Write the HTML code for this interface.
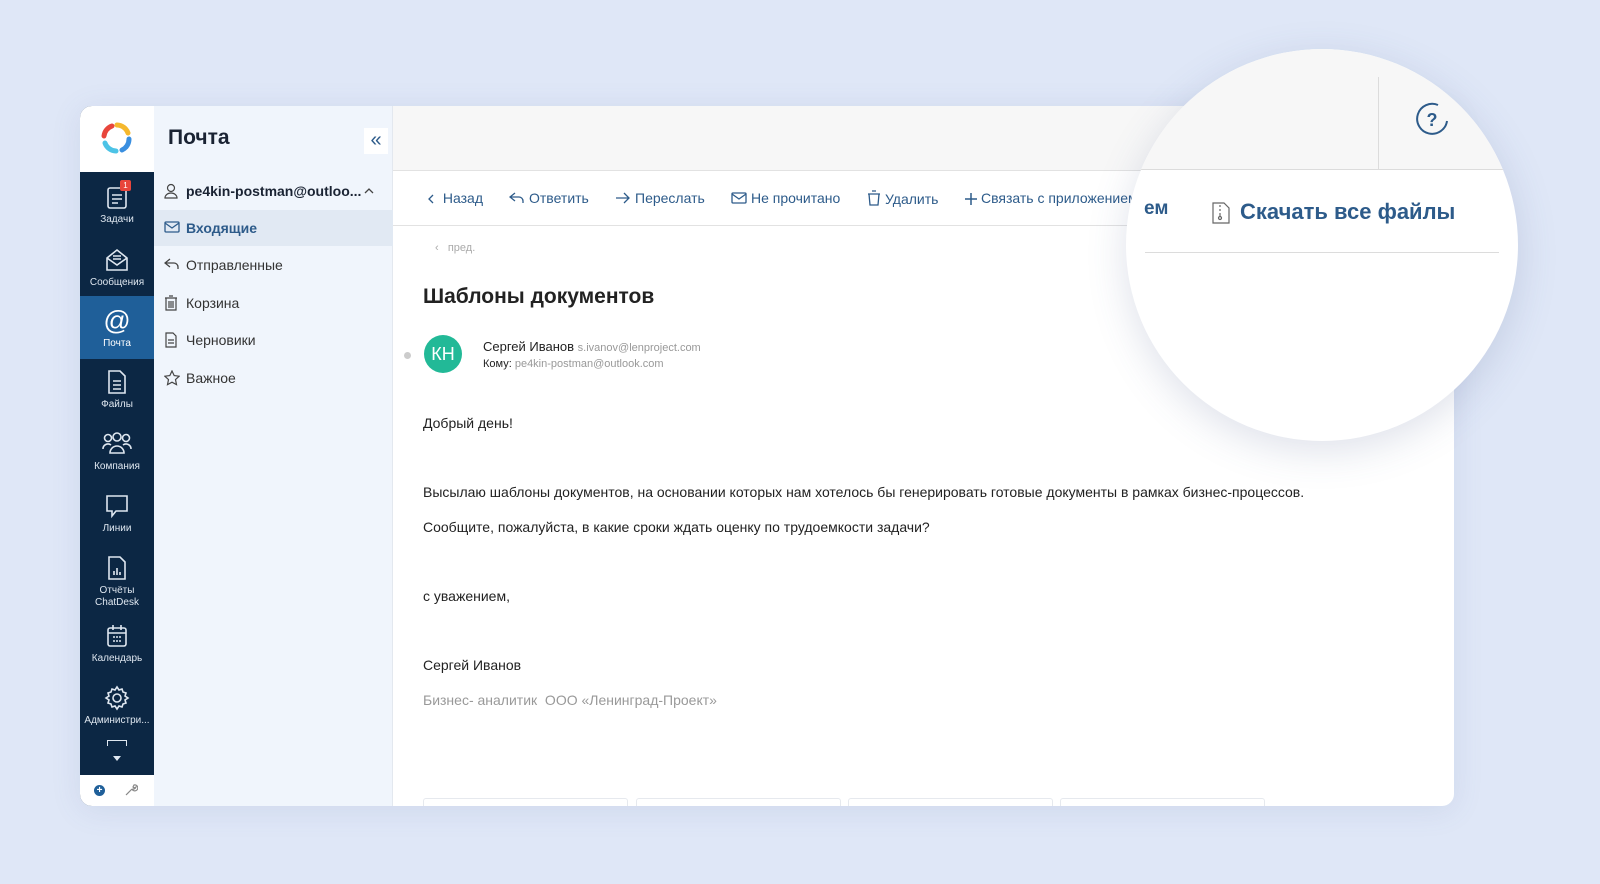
<!DOCTYPE html>
<html><head><meta charset="utf-8"><style>
*{box-sizing:border-box;margin:0;padding:0}
body{width:1600px;height:884px;background:#dfe7f7;font-family:"Liberation Sans","Noto Sans CJK SC",sans-serif;position:relative;overflow:hidden;color:#222}
.card{position:absolute;left:80px;top:106px;width:1374px;height:700px;background:#fff;border-radius:12px;overflow:hidden;box-shadow:0 4px 30px rgba(90,110,160,.12)}
.rail{position:absolute;left:0;top:0;width:74px;height:700px;background:#0c2744}
.logo{position:absolute;left:0;top:0;width:74px;height:66px;background:#fff}
.ri{position:absolute;left:0;width:74px;text-align:center;color:#dfe7f0;font-size:10px;line-height:12px}
.ri svg{display:block;margin:0 auto 3px}
.rbot{position:absolute;left:0;bottom:0;width:74px;height:31px;background:#fff}
.fp{position:absolute;left:74px;top:0;width:239px;height:700px;background:#f0f5fc;border-right:1px solid #e3e8ef}
.fp h1{position:absolute;left:14px;top:20px;font-size:21px;font-weight:bold;color:#1a2333}
.fi{position:absolute;left:0;width:239px;height:36px;font-size:14px;color:#333;padding-left:32px;line-height:36px}
.fi svg{position:absolute;left:10px;top:10px}
.main{position:absolute;left:313px;top:0;right:0;height:700px}
.hdr{position:absolute;left:0;top:0;right:0;height:65px;background:#f7f7f7;border-bottom:1px solid #e2e2e2}
.tb{position:absolute;top:65px;left:0;right:0;height:55px;border-bottom:1px solid #e2e2e2;font-size:14px;color:#2d5b8a}
.tb span{position:absolute;top:19px;white-space:nowrap}
.tb svg{vertical-align:-2px;margin-right:4px}
.t{position:absolute;left:30px;font-size:14px;white-space:nowrap}
.att{position:absolute;top:692px;width:205px;height:20px;border:1px solid #e6e9ee;border-radius:3px}
.circle{position:absolute;left:1126px;top:49px;width:392px;height:392px;border-radius:50%;background:#fff;box-shadow:0 10px 40px rgba(70,90,140,.18);overflow:hidden}
</style></head><body>
<div class="card">
 <div class="rail">
  <div class="logo"><svg width="74" height="66" viewBox="0 0 74 66"><g fill="none" stroke-width="5" stroke-linecap="round"><path d="M24 30 A12 12 0 0 1 32 20" stroke="#e8463c"/><path d="M37 19 A12 12 0 0 1 48 27" stroke="#f5b82e"/><path d="M49 33 A12 12 0 0 1 42 44" stroke="#3a8fe0"/><path d="M36 45 A12 12 0 0 1 25 37" stroke="#4cc3e6"/></g></svg></div>
  <div class="ri" style="top:77px"><svg width="24" height="28" viewBox="0 0 24 26" fill="none" stroke="#dfe7f0" stroke-width="1.6"><rect x="3" y="4" width="18" height="20" rx="2"/><path d="M7 11h10M7 15h10M7 19h6"/></svg>Задачи<div style="position:absolute;left:40px;top:-3px;width:11px;height:11px;background:#e8463c;color:#fff;font-size:8px;line-height:11px;border-radius:2px">1</div></div>
  <div class="ri" style="top:140px"><svg width="26" height="28" viewBox="0 0 26 26" fill="none" stroke="#dfe7f0" stroke-width="1.6"><path d="M3 11 13 3l10 8v12H3z"/><path d="M3 11l10 7 10-7M9 9h8M9 12h8"/></svg>Сообщения</div>
  <div style="position:absolute;top:190px;left:0;width:74px;height:63px;background:#1f5f99"></div>
  <div class="ri" style="top:201px;color:#fff"><svg width="28" height="28" viewBox="0 0 26 26"><text x="13" y="21" text-anchor="middle" font-size="25" fill="#fff" font-family="Liberation Sans">@</text></svg>Почта</div>
  <div class="ri" style="top:262px"><svg width="24" height="28" viewBox="0 0 24 26" fill="none" stroke="#dfe7f0" stroke-width="1.6"><path d="M4 2h11l5 5v17H4z"/><path d="M8 12h8M8 16h8M8 20h8"/></svg>Файлы</div>
  <div class="ri" style="top:324px"><svg width="32" height="28" viewBox="0 0 32 26" fill="none" stroke="#dfe7f0" stroke-width="1.6"><circle cx="7" cy="7" r="3.5"/><circle cx="16" cy="6" r="4"/><circle cx="25" cy="7" r="3.5"/><path d="M2 18a5 5 0 0 1 8-4M30 18a5 5 0 0 0-8-4M9 22a7 7 0 0 1 14 0z"/></svg>Компания</div>
  <div class="ri" style="top:386px"><svg width="26" height="28" viewBox="0 0 26 26" fill="none" stroke="#dfe7f0" stroke-width="1.6"><path d="M3 3h20v15H12l-4 5v-5H3z"/></svg>Линии</div>
  <div class="ri" style="top:448px"><svg width="24" height="28" viewBox="0 0 24 26" fill="none" stroke="#dfe7f0" stroke-width="1.6"><path d="M4 2h11l5 5v17H4z"/><path d="M9 20v-4M12 20v-7M15 20v-3"/></svg>Отчёты<br>ChatDesk</div>
  <div class="ri" style="top:516px"><svg width="24" height="28" viewBox="0 0 24 26" fill="none" stroke="#dfe7f0" stroke-width="1.6"><rect x="3" y="5" width="18" height="18" rx="2"/><path d="M3 10h18M8 2v5M16 2v5M8 14h2M11 14h2M14 14h2M8 18h2M11 18h2M14 18h2"/></svg>Календарь</div>
  <div class="ri" style="top:578px"><svg width="26" height="28" viewBox="0 0 26 26" fill="none" stroke="#dfe7f0" stroke-width="1.6"><circle cx="13" cy="13" r="4"/><path d="M13 2l2 3 3-1 1 3 3 1-1 3 3 2-3 2 1 3-3 1-1 3-3-1-2 3-2-3-3 1-1-3-3-1 1-3-3-2 3-2-1-3 3-1 1-3 3 1z"/></svg>Администри...</div>
  <div style="position:absolute;top:634px;left:27px;width:20px;height:6px;border:1.6px solid #dfe7f0;border-bottom:none"></div>
  <div style="position:absolute;top:650px;left:33px;border:4px solid transparent;border-top:5px solid #dfe7f0"></div>
  <div class="rbot"><div style="position:absolute;left:14px;top:10px;width:11px;height:11px;border-radius:50%;background:#1f5f99;color:#fff;font-size:10px;line-height:11px;text-align:center;font-weight:bold">+</div><svg style="position:absolute;left:44px;top:8px" width="14" height="14" viewBox="0 0 14 14" fill="none" stroke="#888" stroke-width="1.2"><path d="M2 12l6-6M8 6a3 3 0 1 0 2-4l-1 2 1 1 2-1a3 3 0 0 1-4 2"/></svg></div>
 </div>
 <div class="fp">
  <h1>Почта</h1>
  <div style="position:absolute;left:210px;top:22px;width:24px;height:26px;background:#fff;color:#2d5b8a;font-size:20px;text-align:center;line-height:24px">«</div>
  <div class="fi" style="top:67px;font-weight:bold;color:#1a2333"><svg width="14" height="16" viewBox="0 0 14 16" fill="none" stroke="#444" stroke-width="1.2"><circle cx="7" cy="5" r="3.5"/><path d="M1 15a6 5 0 0 1 12 0z"/></svg>pe4kin-postman@outloo...<svg style="left:210px;top:15px" width="10" height="6" viewBox="0 0 10 6" fill="none" stroke="#444" stroke-width="1.3"><path d="M1 5l4-4 4 4"/></svg></div>
  <div class="fi" style="top:104px;background:#e1e9f3;color:#2d5b8a;font-weight:bold"><svg width="16" height="14" viewBox="0 0 16 14" fill="none" stroke="#2d5b8a" stroke-width="1.3"><rect x="1" y="2" width="14" height="10" rx="1"/><path d="M1 3l7 5 7-5"/></svg>Входящие</div>
  <div class="fi" style="top:141px"><svg width="16" height="14" viewBox="0 0 16 14" fill="none" stroke="#444" stroke-width="1.3"><path d="M6 2L1 6l5 4M1 6h9a4 4 0 0 1 4 4v2"/></svg>Отправленные</div>
  <div class="fi" style="top:179px"><svg width="14" height="16" viewBox="0 0 14 16" fill="none" stroke="#444" stroke-width="1.2"><path d="M2 3h10v12H2zM1 3h12M5 1h4M5 6v7M7 6v7M9 6v7"/></svg>Корзина</div>
  <div class="fi" style="top:216px"><svg width="14" height="16" viewBox="0 0 14 16" fill="none" stroke="#444" stroke-width="1.2"><path d="M2 1h7l3 3v11H2zM4 8h6M4 11h6"/></svg>Черновики</div>
  <div class="fi" style="top:254px"><svg width="16" height="16" viewBox="0 0 16 16" fill="none" stroke="#444" stroke-width="1.2"><path d="M8 1l2.2 4.6 5 .6-3.7 3.4 1 5L8 12.2 3.5 14.6l1-5L.8 6.2l5-.6z"/></svg>Важное</div>
 </div>
 <div class="main">
  <div class="hdr"></div>
  <div class="tb">
   <span style="left:34px"><svg width="8" height="12" viewBox="0 0 8 12" fill="none" stroke="#2d5b8a" stroke-width="1.3"><path d="M6 2L2 6l4 4"/></svg> Назад</span>
   <span style="left:116px"><svg width="16" height="14" viewBox="0 0 16 14" fill="none" stroke="#2d5b8a" stroke-width="1.3"><path d="M6 2L1 6l5 4M1 6h9a4 4 0 0 1 4 4v2"/></svg>Ответить</span>
   <span style="left:222px"><svg width="16" height="14" viewBox="0 0 16 14" fill="none" stroke="#2d5b8a" stroke-width="1.3"><path d="M1 7h13M9 2l5 5-5 5"/></svg>Переслать</span>
   <span style="left:338px"><svg width="16" height="14" viewBox="0 0 16 14" fill="none" stroke="#2d5b8a" stroke-width="1.3"><rect x="1" y="2" width="14" height="10" rx="1"/><path d="M1 3l7 5 7-5"/></svg>Не прочитано</span>
   <span style="left:474px"><svg width="14" height="16" viewBox="0 0 14 16" fill="none" stroke="#2d5b8a" stroke-width="1.3"><path d="M2 4h10l-1 11H3zM1 4h12M5 1h4"/></svg>Удалить</span>
   <span style="left:572px"><svg width="12" height="12" viewBox="0 0 12 12" fill="none" stroke="#2d5b8a" stroke-width="1.5"><path d="M6 0v12M0 6h12"/></svg>Связать с приложением</span>
  </div>
  <div class="t" style="top:136px;left:42px;font-size:11px;color:#aaa">‹ &nbsp; пред.</div>
  <div class="t" style="top:179px;font-size:21px;font-weight:bold;color:#222">Шаблоны документов</div>
  <div style="position:absolute;left:11px;top:246px;width:7px;height:7px;border-radius:50%;background:#ccc"></div>
  <div style="position:absolute;left:31px;top:335px;top:335px;top:335px;top:335px;top:335px;top:335px;top:335px;top:335px;top:335px;top:335px;top:335px;top:335px;top:335px;top:335px;top:335px;top:335px;top:335px;top:335px;top:335px;top:335px;top:335px;top:229px;width:38px;height:38px;border-radius:50%;background:#22b997;color:#fff;font-size:18px;line-height:38px;text-align:center">КН</div>
  <div class="t" style="left:90px;top:233px;font-size:13px">Сергей Иванов <span style="font-size:11px;color:#999">s.ivanov@lenproject.com</span></div>
  <div class="t" style="left:90px;top:252px;font-size:11px">Кому: <span style="color:#999">pe4kin-postman@outlook.com</span></div>
  <div class="t" style="top:309px">Добрый день!</div>
  <div class="t" style="top:378px">Высылаю шаблоны документов, на основании которых нам хотелось бы генерировать готовые документы в рамках бизнес-процессов.</div>
  <div class="t" style="top:413px">Сообщите, пожалуйста, в какие сроки ждать оценку по трудоемкости задачи?</div>
  <div class="t" style="top:482px">с уважением,</div>
  <div class="t" style="top:551px">Сергей Иванов</div>
  <div class="t" style="top:586px;color:#999">Бизнес- аналитик &nbsp;ООО «Ленинград-Проект»</div>
  <div class="att" style="left:30px"></div><div class="att" style="left:243px"></div><div class="att" style="left:455px"></div><div class="att" style="left:667px"></div>
 </div>
</div>
<div class="circle">
 <div style="position:absolute;left:0;top:0;width:392px;height:121px;background:#f7f7f7;border-bottom:1px solid #dcdcdc"></div>
 <div style="position:absolute;left:252px;top:28px;width:1px;height:93px;background:#dcdcdc"></div>
 <svg style="position:absolute;left:288px;top:52px" width="36" height="36" viewBox="0 0 36 36" fill="none" stroke="#2d5b8a" stroke-width="2"><path d="M33 20A15 15 0 1 1 24 4"/><text x="18" y="25" text-anchor="middle" font-size="18" fill="#2d5b8a" stroke="none" font-family="Liberation Sans" font-weight="bold">?</text></svg>
 <div style="position:absolute;left:18px;top:149px;font-size:19px;font-weight:bold;color:#2d5b8a">ем</div>
 <svg style="position:absolute;left:86px;top:153px" width="18" height="22" viewBox="0 0 18 22" fill="none" stroke="#666" stroke-width="1.2"><path d="M1 1h11l5 5v15H1z"/><path d="M8 3v2M8 7v2M8 11v3"/><circle cx="8" cy="16" r="1.5"/></svg>
 <div style="position:absolute;left:114px;top:150px;font-size:22px;font-weight:bold;color:#2d5b8a;white-space:nowrap">Скачать все файлы</div>
 <div style="position:absolute;left:19px;top:203px;width:354px;height:1px;background:#dcdcdc"></div>
</div>
</body></html>
